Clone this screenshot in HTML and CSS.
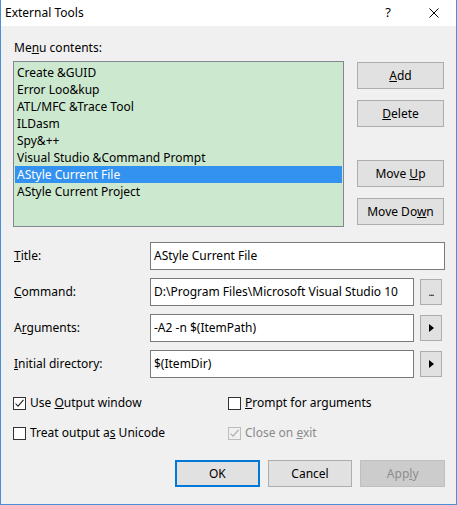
FILE: index.html
```html
<!DOCTYPE html>
<html>
	<head>
		<link rel="stylesheet" href="styles.css">
		<title>External Tools</title>
	</head>
	<body>
		<div class="window">
			<div class="titlebar">
				<span class="caption">External Tools</span>
				<span class="help">?</span>
				<span class="close">
					<svg width="10" height="10" viewBox="0 0 10 10"><path d="M0.5 0.5L9.5 9.5M9.5 0.5L0.5 9.5" stroke="#000" stroke-width="1" fill="none"/></svg>
				</span>
			</div>
			<div class="client">
				<div class="label-menu">Me<u>n</u>u contents:</div>
				<div class="menu-row">
					<ul class="listbox">
						<li>Create &amp;GUID</li>
						<li>Error Loo&amp;kup</li>
						<li>ATL/MFC &amp;Trace Tool</li>
						<li>ILDasm</li>
						<li>Spy&amp;++</li>
						<li>Visual Studio &amp;Command Prompt</li>
						<li class="selected">AStyle Current File</li>
						<li>AStyle Current Project</li>
					</ul>
					<div class="side-buttons">
						<div class="button btn-add"><span><u>A</u>dd</span></div>
						<div class="button btn-delete"><span><u>D</u>elete</span></div>
						<div class="button btn-up"><span>Move <u>U</u>p</span></div>
						<div class="button btn-down"><span>Move Do<u>w</u>n</span></div>
					</div>
				</div>
				<div class="form">
					<div class="label"><span><u>T</u>itle:</span></div>
					<div class="field">
						<div class="textbox textbox-wide">AStyle Current File</div>
					</div>
					<div class="label"><span><u>C</u>ommand:</span></div>
					<div class="field">
						<div class="textbox">D:\Program Files\Microsoft Visual Studio 10</div>
						<div class="small-button dots">...</div>
					</div>
					<div class="label"><span>A<u>r</u>guments:</span></div>
					<div class="field">
						<div class="textbox">-A2 -n $(ItemPath)</div>
						<div class="small-button"><span class="arrow"></span></div>
					</div>
					<div class="label"><span><u>I</u>nitial directory:</span></div>
					<div class="field">
						<div class="textbox">$(ItemDir)</div>
						<div class="small-button"><span class="arrow"></span></div>
					</div>
				</div>
				<div class="options">
					<div class="check">
						<span class="box"><svg width="11" height="11" viewBox="0 0 11 11"><path d="M1.5 5.5L4 8.2L9.5 1.8" stroke="#222" stroke-width="1.1" fill="none"/></svg></span>
						<span>Use <u>O</u>utput window</span>
					</div>
					<div class="check">
						<span class="box"></span>
						<span><u>P</u>rompt for arguments</span>
					</div>
					<div class="check">
						<span class="box"></span>
						<span>Treat output a<u>s</u> Unicode</span>
					</div>
					<div class="check disabled">
						<span class="box"><svg width="11" height="11" viewBox="0 0 11 11"><path d="M1.5 5.5L4 8.2L9.5 1.8" stroke="#a8a8a8" stroke-width="1.1" fill="none"/></svg></span>
						<span>Close on <u>e</u>xit</span>
					</div>
				</div>
				<div class="dialog-buttons">
					<div class="button btn-ok"><span>OK</span></div>
					<div class="button"><span>Cancel</span></div>
					<div class="button btn-disabled"><span>App<u>l</u>y</span></div>
				</div>
			</div>
		</div>
	</body>
</html>
```

FILE: styles.css
```css
body {
	margin: 0;
	font-family: "Noto Sans", sans-serif;
	font-size: 12px;
	color: #000;
}
u {
	text-underline-offset: 1px;
}
.window {
	width: 457px;
	height: 505px;
	box-sizing: border-box;
	border: 1px solid #4a90d4;
	border-top: none;
	background-color: #f0f0f0;
	display: flex;
	flex-direction: column;
}
.titlebar {
	height: 26px;
	background-color: #fff;
	display: flex;
	align-items: center;
}
.caption {
	flex: 1;
	padding-left: 4px;
	padding-bottom: 1px;
}
.help {
	width: 46px;
	text-align: center;
	font-size: 13px;
	padding-bottom: 2px;
}
.close {
	width: 46px;
	height: 26px;
	display: flex;
	align-items: center;
	justify-content: center;
	margin-right: -1px;
}
.client {
	flex: 1;
	padding: 13px 11px 0 12px;
}
.label-menu {
	line-height: 17px;
	padding-left: 1px;
}
.menu-row {
	display: flex;
	margin-top: 5px;
}
.listbox {
	list-style: none;
	margin: 0;
	padding: 1px;
	width: 331px;
	height: 166px;
	box-sizing: border-box;
	border: 1px solid #828790;
	background-color: #cce8cf;
}
.listbox li {
	line-height: 17px;
	height: 17px;
	padding-left: 2px;
	white-space: nowrap;
}
.listbox li:first-child {
	margin-top: 1px;
}
.listbox li.selected {
	background-color: #3391f0;
	color: #fff;
}
.side-buttons {
	display: flex;
	flex-direction: column;
	margin-left: 13px;
	padding-top: 1px;
}
.button {
	width: 87px;
	height: 27px;
	box-sizing: border-box;
	border: 1px solid #adadad;
	background-color: #e1e1e1;
	display: flex;
	align-items: center;
	justify-content: center;
	padding-bottom: 1px;
	white-space: nowrap;
}
.btn-delete {
	margin-top: 11px;
}
.btn-up {
	margin-top: 33px;
}
.btn-down {
	margin-top: 11px;
}
.form {
	display: grid;
	grid-template-columns: 137px 1fr;
	row-gap: 8px;
	margin-top: 15px;
}
.label {
	display: flex;
	align-items: center;
	padding-left: 1px;
	padding-bottom: 2px;
}
.field {
	display: flex;
	align-items: center;
	height: 28px;
}
.textbox {
	width: 264px;
	height: 28px;
	box-sizing: border-box;
	border: 1px solid #7a7a7a;
	background-color: #fff;
	padding: 0 3px 2px 3px;
	display: flex;
	align-items: center;
	white-space: nowrap;
	overflow: hidden;
}
.textbox-wide {
	width: 295px;
}
.small-button {
	width: 22px;
	height: 26px;
	box-sizing: border-box;
	margin-left: 6px;
	border: 1px solid #adadad;
	background-color: #e1e1e1;
	display: flex;
	align-items: center;
	justify-content: center;
}
.dots {
	font-size: 10px;
	align-items: flex-end;
	padding-bottom: 5px;
	letter-spacing: -1px;
}
.arrow {
	width: 0;
	height: 0;
	border-top: 4px solid transparent;
	border-bottom: 4px solid transparent;
	border-left: 5px solid #000;
	margin-left: 1px;
}
.options {
	display: grid;
	grid-template-columns: 215px 1fr;
	row-gap: 13px;
	margin-top: 16px;
}
.check {
	display: flex;
	align-items: center;
	height: 17px;
	gap: 4px;
	white-space: nowrap;
}
.box {
	width: 13px;
	height: 13px;
	box-sizing: border-box;
	border: 1px solid #333;
	background-color: #fff;
	display: flex;
	align-items: center;
	justify-content: center;
	margin-bottom: -1px;
}
.disabled {
	color: #8a8a8a;
}
.disabled .box {
	border-color: #bcbcbc;
	background-color: #f0f0f0;
}
.dialog-buttons {
	display: flex;
	gap: 8px;
	margin-top: 19px;
	padding-left: 162px;
}
.dialog-buttons .button {
	width: 86px;
}
.btn-ok {
	border: 2px solid #0078d7;
}
.btn-disabled {
	background-color: #cccccc;
	border-color: #bfbfbf;
	color: #8c8c8c;
}
```
